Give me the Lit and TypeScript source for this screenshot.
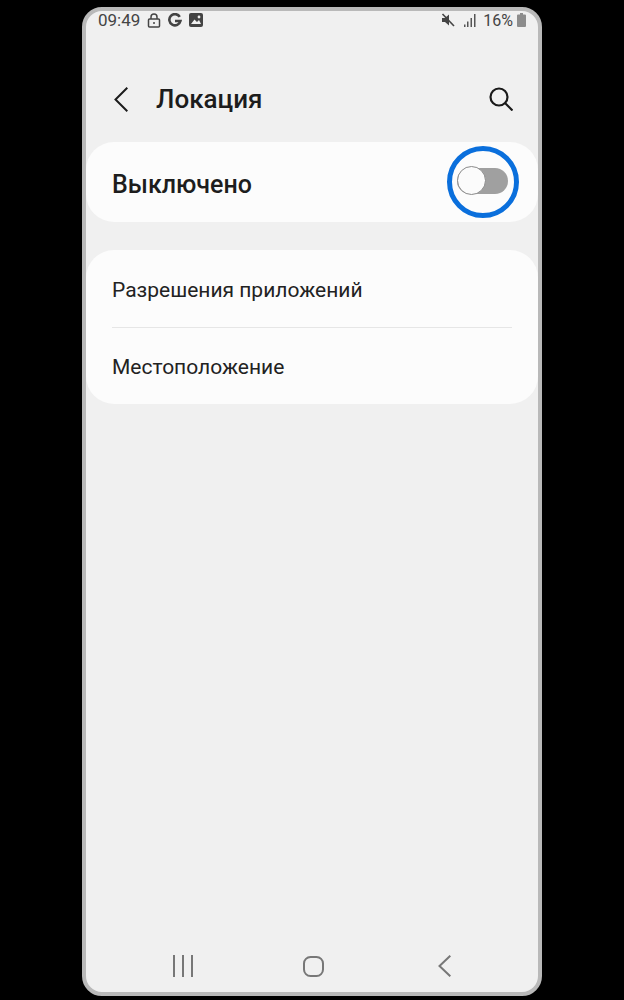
import { LitElement, html, css } from "lit";
import { customElement } from "lit/decorators.js";

@customElement("app-root")
export class AppRoot extends LitElement {
  static styles = css`
    :host { display: block; width: 624px; height: 1000px; background: #000; overflow: hidden; font-family: Roboto, "Liberation Sans", sans-serif; color: #1a1a1a; }
    .wrap { padding: 7px 82px 4px 82px; }
    .phone { box-sizing: border-box; height: 989px; border: 4px solid #b9b9b9; border-radius: 20px; background: #f0f0f0; display: flex; flex-direction: column; overflow: hidden; position: relative; }
    .status { height: 18px; padding: 0 12px 0 12px; display: flex; align-items: center; color: #444; font-size: 17px; }
    .status .left, .status .right { display: flex; align-items: center; }
    .status .right { margin-left: auto; }
    .status .right span { font-size: 16px; }
    .time { margin-right: 7px; }
    .lock { margin-right: 7px; }
    .g { margin-right: 7px; }
    .mute { margin-right: 9px; }
    .signal { margin-right: 7px; }
    .battery { margin-left: 4px; }
    .header { height: 56px; margin-top: 42px; display: flex; align-items: center; padding: 0 25px 0 28px; }
    .header .back { margin-right: 28px; }
    .header h1 { margin: 0; font-size: 26px; font-weight: 500; color: #1c1c1c; }
    .header .search { margin-left: auto; }
    .card { background: #fcfcfc; border-radius: 28px; }
    .toggle-card { height: 80px; margin-top: 15px; display: flex; align-items: center; padding: 4px 26px 0; box-sizing: border-box; position: relative; }
    .toggle-card .label { font-size: 25px; font-weight: 500; color: #1d1d1d; }
    .switch { margin-left: auto; margin-right: 4px; margin-top: -6px; width: 51px; height: 26px; border-radius: 13px; background: #a0a0a0; position: relative; }
    .knob { position: absolute; left: 0; top: -2px; width: 29px; height: 29px; box-sizing: border-box; border-radius: 50%; background: #fbfbfb; border: 1px solid #8a8a8a; }
    .ring { position: absolute; left: 361px; top: 4px; width: 72px; height: 72px; box-sizing: border-box; border: 5px solid #0a6fdc; border-radius: 50%; }
    .list { margin-top: 28px; height: 154px; padding: 0 26px; box-sizing: border-box; display: flex; flex-direction: column; }
    .row { flex: 1; display: flex; align-items: center; font-size: 21px; color: #222; }
    .row.first { padding-top: 2px; }
    .row.second { padding-top: 1px; }
    .sep { height: 1px; background: #e6e6e6; }
    .nav { margin-top: auto; height: 52px; display: flex; align-items: center; padding: 0 0 0 87px; }
    .nav .home { margin: 0 114px 0 110px; }
    svg { display: block; }
  `;

  render() {
    return html`
      <div class="wrap">
        <div class="phone">
          <div class="status">
            <div class="left">
              <span class="time">09:49</span>
              <svg class="lock" width="14" height="15" viewBox="0 0 14 15" fill="none" stroke="#444" stroke-width="1.5"><rect x="1.500" y="6" width="11" height="8" rx="1"/><path d="M4 6V4a3 3 0 0 1 6 0v2"/><circle cx="7" cy="10" r="1" fill="#444" stroke="none"/></svg>
              <svg class="g" width="14" height="15" viewBox="0 0 15 15" fill="none" stroke="#444" stroke-width="2.800"><path d="M12.600 3.600A6 6 0 1 0 13.300 8H7.500"/></svg>
              <svg width="14" height="14" viewBox="0 0 14 14"><rect width="14" height="14" rx="2" fill="#444"/><path d="M2 11l3.500-4.500L8 9l2-2 2 4z" fill="#f0f0f0"/><circle cx="10" cy="4" r="1.400" fill="#f0f0f0"/></svg>
            </div>
            <div class="right">
              <svg class="mute" width="14" height="14" viewBox="0 0 14 14"><path d="M1 5h3l4-3.500v11L4 9H1z" fill="#444"/><path d="M1.500 1l11.500 12" stroke="#444" stroke-width="1.600"/></svg>
              <svg class="signal" width="12" height="13" viewBox="0 0 12 13" fill="#555"><rect x="0" y="10.500" width="1.500" height="2.500"/><rect x="3" y="7.500" width="1.500" height="5.500"/><rect x="6.500" y="4" width="1.500" height="9"/><rect x="10" y="0" width="1.500" height="13"/></svg>
              <span>16%</span>
              <svg class="battery" width="9" height="14" viewBox="0 0 9 14"><path d="M3 0h3v1.500h2a1 1 0 0 1 1 1V13a1 1 0 0 1-1 1H1a1 1 0 0 1-1-1V2.500a1 1 0 0 1 1-1h2z" fill="#8c8c8c"/></svg>
            </div>
          </div>
          <div class="header">
            <svg class="back" width="14" height="25" viewBox="0 0 14 25" fill="none" stroke="#1c1c1c" stroke-width="2"><path d="M13.300 0.700L1.500 12.500 13.300 24.300"/></svg>
            <h1>Локация</h1>
            <svg class="search" width="24" height="24" viewBox="0 0 24 24" fill="none" stroke="#1a1a1a" stroke-width="2.200"><circle cx="10" cy="10" r="8.500"/><path d="M16 16l7.500 7.500"/></svg>
          </div>
          <div class="card toggle-card">
            <span class="label">Выключено</span>
            <div class="switch"><div class="knob"></div></div>
            <div class="ring"></div>
          </div>
          <div class="card list">
            <div class="row first">Разрешения приложений</div>
            <div class="sep"></div>
            <div class="row second">Местоположение</div>
          </div>
          <div class="nav">
            <svg width="20" height="22" viewBox="0 0 20 22" fill="#777"><rect x="0" y="0" width="2" height="22"/><rect x="9" y="0" width="2" height="22"/><rect x="18" y="0" width="2" height="22"/></svg>
            <svg class="home" width="21" height="21" viewBox="0 0 21 21" fill="none" stroke="#777" stroke-width="2"><rect x="1" y="1" width="19" height="19" rx="6.500"/></svg>
            <svg width="13" height="22" viewBox="0 0 13 22" fill="none" stroke="#777" stroke-width="2"><path d="M12.300 0.700L1.500 11l10.800 10.300"/></svg>
          </div>
        </div>
      </div>
    `;
  }
}
